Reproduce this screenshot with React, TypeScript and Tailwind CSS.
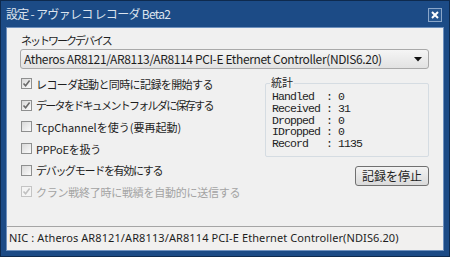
import React from 'react';

const JP = { fontFamily: '"Noto Sans CJK JP", "Noto Sans", sans-serif' };

type Opt = { label: string; checked: boolean; disabled?: boolean; ls: string };

const OPTIONS: Opt[] = [
  { label: 'レコーダ起動と同時に記録を開始する', checked: true, ls: 'tracking-[-0.6px]' },
  { label: 'データをドキュメントフォルダに保存する', checked: true, ls: 'tracking-[-1.7px]' },
  { label: 'TcpChannelを使う(要再起動)', checked: false, ls: 'tracking-[0px]' },
  { label: 'PPPoEを扱う', checked: false, ls: 'tracking-[-0.2px]' },
  { label: 'デバッグモードを有効にする', checked: false, ls: 'tracking-[-1.3px]' },
  { label: 'クラン戦終了時に戦績を自動的に送信する', checked: true, disabled: true, ls: 'tracking-[-0.25px]' },
];

const STATS = [
  ['Handled', '0'],
  ['Received', '31'],
  ['Dropped', '0'],
  ['IDropped', '0'],
  ['Record', '1135'],
];

function CheckBox({ checked, disabled }: { checked: boolean; disabled?: boolean }) {
  return (
    <div
      className={`w-[11px] h-[11px] shrink-0 border flex items-center justify-center ${
        disabled ? 'border-[#c4c4c4] bg-[#f4f4f4]' : 'border-[#8e8f8f] bg-gradient-to-br from-[#d9d9d9] to-[#fbfbfb]'
      }`}
    >
      {checked && (
        <svg width="9" height="9" viewBox="0 0 9 9">
          <path
            d="M1.5 4.5 L3.6 6.8 L7.6 1.6"
            fill="none"
            stroke={disabled ? '#c0c0c0' : '#6a6a6a'}
            strokeWidth="1.6"
          />
        </svg>
      )}
    </div>
  );
}

export default function App() {
  return (
    <div className="w-[450px] h-[257px] bg-[#1c4b86] border border-[#0e2a4e] flex flex-col overflow-hidden">
      {/* title bar */}
      <div className="h-[26px] flex items-center justify-between pl-[5px] pr-[7px]">
        <span className="text-[12px] text-[#dce4ee] tracking-[-0.7px]" style={JP}>
          設定 - アヴァレコ レコーダ Beta2
        </span>
        <div className="w-[14px] h-[14px] border border-[#8aa6c9] bg-[#27568f] flex items-center justify-center mt-[1px]">
          <svg width="8" height="8" viewBox="0 0 8 8">
            <path d="M1 1 L7 7 M7 1 L1 7" stroke="#ffffff" strokeWidth="2" />
          </svg>
        </div>
      </div>

      {/* client area */}
      <div className="flex-1 mx-[5px] mb-[5px] border border-[#6e90bd] bg-[#f0f0f0] flex flex-col text-[#1e1e1e]">
        <div className="flex-1 pl-[13px] pr-[14px] pt-[4px]">
          <div className="text-[11px] leading-[16px] tracking-[-2px] pl-[1px]" style={JP}>
            ネットワークデバイス
          </div>
          <div className="mt-[1px] h-[20px] border border-[#a9a9a9] rounded-[3px] bg-gradient-to-b from-[#f5f5f5] to-[#e2e2e2] flex items-center justify-between pl-[3px] pr-[6px]">
            <span className="text-[12px] tracking-[-0.36px]" style={JP}>
              Atheros AR8121/AR8113/AR8114 PCI-E Ethernet Controller(NDIS6.20)
            </span>
            <svg width="8" height="5" viewBox="0 0 8 5">
              <path d="M0 0 H8 L4 4.5 Z" fill="#111111" />
            </svg>
          </div>

          <div className="flex justify-between mt-[4px]">
            <div className="flex flex-col pl-[1px]">
              {OPTIONS.map((o) => (
                <div key={o.label} className="h-[21.6px] flex items-center gap-[4px]">
                  <CheckBox checked={o.checked} disabled={o.disabled} />
                  <span
                    className={`text-[11px] leading-[14px] ${o.ls} ${o.disabled ? 'text-[#a3a3a3]' : ''}`}
                    style={JP}
                  >
                    {o.label}
                  </span>
                </div>
              ))}
            </div>

            <div className="flex flex-col items-end">
              <div className="relative w-[164px] h-[74px] border border-[#d5dce2] rounded-[2px] mt-[10px] pl-[6px] pt-[7px]">
                <span
                  className="absolute -top-[8px] left-[4px] px-[1px] bg-[#f0f0f0] text-[11px] leading-[12px]"
                  style={JP}
                >
                  統計
                </span>
                <div className="font-['Liberation_Mono'] text-[11.5px] leading-[11.8px] tracking-[-0.9px] whitespace-pre">
                  {STATS.map(([k, v]) => (
                    <div key={k}>{`${k.padEnd(9, ' ')}: ${v}`}</div>
                  ))}
                </div>
              </div>
              <button
                className="mt-[9px] w-[74px] h-[20px] border border-[#707070] rounded-[3px] bg-gradient-to-b from-[#f3f3f3] to-[#dadada] text-[12px] leading-[16px] flex items-center justify-center"
                style={JP}
              >
                記録を停止
              </button>
            </div>
          </div>
        </div>

        {/* status bar */}
        <div className="h-[24px] border-t border-[#a5a5a5] bg-[#f1f0ef] flex items-center pl-[2px]">
          <span className="text-[11px] tracking-[0.1px] font-['Noto_Sans']">
            NIC : Atheros AR8121/AR8113/AR8114 PCI-E Ethernet Controller(NDIS6.20)
          </span>
        </div>
      </div>
    </div>
  );
}
